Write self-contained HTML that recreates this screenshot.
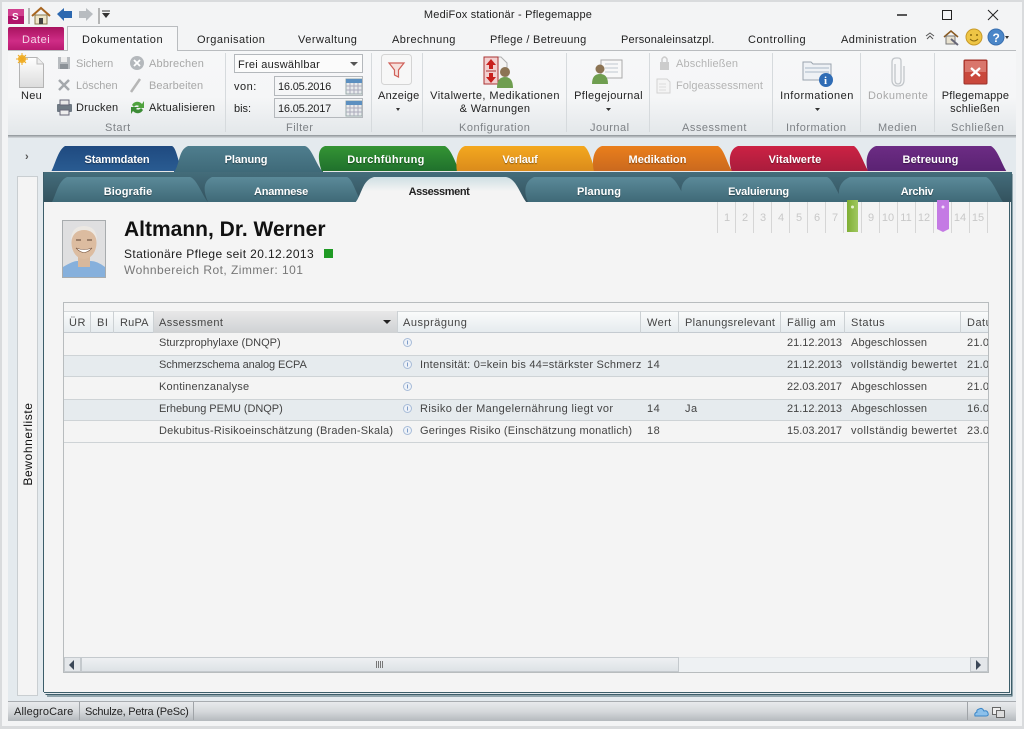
<!DOCTYPE html>
<html><head><meta charset="utf-8">
<style>
html,body{margin:0;padding:0}
body{width:1024px;height:729px;overflow:hidden;position:relative;background:#f3f4f5;font:11px "Liberation Sans",sans-serif;color:#222;letter-spacing:.5px}
.t{position:absolute;white-space:nowrap;line-height:14px;margin-top:1px}
#tbl .t{margin-top:0}
.c{transform:translateX(-50%);text-align:center}
.g{color:#a8a8a8}
.l{color:#7d8185}
.b{position:absolute}
.w{color:#fff;font-weight:bold;letter-spacing:.05px;text-shadow:0 1px 1px rgba(0,0,0,.4)}
svg{position:absolute;left:0;top:0}
</style></head><body>
<div class="b" style="left:0;top:0;width:1024px;height:2px;background:#d9dbdd"></div>
<div class="b" style="left:0;top:0;width:2px;height:729px;background:#d9dbdd"></div>
<div class="b" style="right:0;top:0;width:2px;height:729px;background:#d9dbdd"></div>
<div class="b" style="left:0;top:726px;width:1024px;height:3px;background:#d9dbdd"></div>
<!-- ribbon -->
<div class="b" style="left:8px;top:50px;width:1008px;height:85px;background:linear-gradient(#f6f7f8,#f5f6f7 55%,#e3e7ea);border-top:1px solid #b9bcbf;box-sizing:border-box"></div>
<div class="b" style="left:8px;top:135px;width:1008px;height:3px;background:linear-gradient(#8b9195,#d8dde0)"></div>
<div class="b" style="left:8px;top:138px;width:1008px;height:563px;background:#e4eaee"></div>
<!-- Datei tab -->
<div class="b" style="left:8px;top:27px;width:56px;height:23px;background:linear-gradient(#a8135f,#cf2c86 60%,#b81a70);border-radius:2px 2px 0 0"></div>
<div class="b" style="left:67px;top:26px;width:111px;height:25px;background:#f6f7f8;border:1px solid #b9bcbf;border-bottom:0;box-sizing:border-box"></div>
<svg width="1024" height="729" viewBox="0 0 1024 729">
<!-- qat -->
<rect x="8" y="9" width="16" height="15" fill="#b0126a"/><rect x="8" y="9" width="16" height="7" fill="#d0408f"/>
<text x="12" y="20" font-family="Liberation Sans" font-size="10" font-weight="bold" fill="#fff">S</text>
<path d="M29 8V24M99 8V24" stroke="#777"/>
<path d="M32 16L41 8L50 16" fill="none" stroke="#a8651f" stroke-width="2"/><path d="M35 15H47V24H35Z" fill="#efe6c8" stroke="#8a7a50"/><rect x="39" y="18" width="4" height="6" fill="#444"/>
<path d="M57 14L64 8V11H72V18H64V21Z" fill="#2c68b0"/>
<path d="M93 14L86 8V11H79V18H86V21Z" fill="#b8bcc0"/>
<path d="M102 11H110" stroke="#333"/><path d="M102 13H110L106 18Z" fill="#333"/>
<!-- window buttons -->
<path d="M897 15H907" stroke="#222" stroke-width="1.5"/><rect x="942.500" y="10.500" width="9" height="9" fill="none" stroke="#222"/><path d="M988 10L998 20M998 10L988 20" stroke="#222"/>
<!-- right icons -->
<path d="M926 36L930 33L934 36M927 39L930 36L933 39" fill="none" stroke="#555"/>
<path d="M944 37L951 31L958 37" fill="none" stroke="#8a5a20" stroke-width="1.500"/><path d="M946 36H955V44H946Z" fill="#e8e2d0" stroke="#777"/><path d="M951 39L958 45" stroke="#667" stroke-width="2"/>
<circle cx="974" cy="37" r="8" fill="#eec545" stroke="#c89a28"/><circle cx="971" cy="35" r="1" fill="#8a6a10"/><circle cx="977" cy="35" r="1" fill="#8a6a10"/><path d="M970 39Q974 43 978 39" fill="none" stroke="#8a6a10"/>
<circle cx="996" cy="37" r="8" fill="#4a86c8" stroke="#3a70b0"/><text x="992.500" y="42" font-family="Liberation Sans" font-size="12" font-weight="bold" fill="#fff">?</text><path d="M1005 36H1009L1007 39Z" fill="#333"/>
<!-- ribbon separators -->
<path d="M225.500 53V132M371.500 53V132M422.500 53V132M566.500 53V132M649.500 53V132M772.500 53V132M860.500 53V132M934.500 53V132" stroke="#d6dadd"/>
<!-- Neu -->
<path d="M19.500 57.500H37L43.500 64V87.500H19.500Z" fill="url(#neu)" stroke="#b4b4b4"/><path d="M37 57.500V64H43.500" fill="#eee" stroke="#bbb"/>
<circle cx="22" cy="59" r="4" fill="#f2b632"/><path d="M22 53V65M16 59H28M18 55L26 63M26 55L18 63" stroke="#eea820"/>
<defs><linearGradient id="neu" x1="0" y1="0" x2="0" y2="1"><stop offset="0" stop-color="#fff"/><stop offset="1" stop-color="#dcdcdc"/></linearGradient>
<linearGradient id="tg" x1="0" y1="0" x2="0" y2="1"><stop offset="0" stop-color="#5b8a99"/><stop offset="1" stop-color="#3f6977"/></linearGradient>
<linearGradient id="ta" x1="0" y1="0" x2="0" y2="1"><stop offset="0" stop-color="#cfdfe3"/><stop offset=".55" stop-color="#f4f4f4"/></linearGradient>
<linearGradient id="tb" x1="0" y1="0" x2="0" y2="1"><stop offset="0" stop-color="#1f4a80"/><stop offset="1" stop-color="#2a5c92"/></linearGradient>
<linearGradient id="tp" x1="0" y1="0" x2="0" y2="1"><stop offset="0" stop-color="#4f7e8e"/><stop offset="1" stop-color="#3f6a79"/></linearGradient>
<linearGradient id="td" x1="0" y1="0" x2="0" y2="1"><stop offset="0" stop-color="#349434"/><stop offset="1" stop-color="#1f6f2c"/></linearGradient>
<linearGradient id="tv" x1="0" y1="0" x2="0" y2="1"><stop offset="0" stop-color="#f4a81e"/><stop offset="1" stop-color="#d98a1c"/></linearGradient>
<linearGradient id="tm" x1="0" y1="0" x2="0" y2="1"><stop offset="0" stop-color="#ea7f1c"/><stop offset="1" stop-color="#c9681e"/></linearGradient>
<linearGradient id="tw" x1="0" y1="0" x2="0" y2="1"><stop offset="0" stop-color="#cc2244"/><stop offset="1" stop-color="#a81c3c"/></linearGradient>
<linearGradient id="tt" x1="0" y1="0" x2="0" y2="1"><stop offset="0" stop-color="#6c2c84"/><stop offset="1" stop-color="#5a2272"/></linearGradient>
<linearGradient id="pn" x1="0" y1="0" x2="0" y2="1"><stop offset="0" stop-color="#446d7b"/><stop offset="1" stop-color="#33525e"/></linearGradient>
<linearGradient id="gb" x1="0" y1="0" x2="1" y2="0"><stop offset="0" stop-color="#7fae34"/><stop offset="1" stop-color="#a0c860"/></linearGradient>
</defs>
<!-- start icons -->
<path d="M58 57H70V69H58Z" fill="#b8bcc0"/><rect x="61" y="57" width="6" height="5" fill="#eee"/><rect x="60" y="64" width="8" height="5" fill="#8c9298"/>
<path d="M59 80L69 90M69 80L59 90" stroke="#a4a8ac" stroke-width="2.500"/>
<rect x="57" y="104" width="15" height="8" rx="1" fill="#6f7a84"/><rect x="60" y="100" width="9" height="5" fill="#e8e8e8" stroke="#667"/><rect x="60" y="110" width="9" height="5" fill="#eee" stroke="#667"/>
<circle cx="137" cy="63" r="7" fill="#b4b8bc"/><path d="M134 60L140 66M140 60L134 66" stroke="#fff" stroke-width="1.800"/>
<path d="M131 92L140 79" stroke="#b6b6b6" stroke-width="2.500"/>
<path d="M132 105A6 6 0 0 1 142 104L144 101V108H137L139 106A3.500 3.500 0 0 0 134 107Z" fill="#4fa23e"/><path d="M143 110A6 6 0 0 1 133 111L131 114V107H138L136 109A3.500 3.500 0 0 0 141 108Z" fill="#3c8c36"/>
<!-- calendar -->
<rect x="346" y="79" width="16" height="15" fill="#e8eaec" stroke="#9aa"/><rect x="346" y="79" width="16" height="4" fill="#5c8fc0"/><path d="M346 86H362M346 90H362M350 83V94M354 83V94M358 83V94" stroke="#aab"/>
<rect x="346" y="101" width="16" height="15" fill="#e8eaec" stroke="#9aa"/><rect x="346" y="101" width="16" height="4" fill="#5c8fc0"/><path d="M346 108H362M346 112H362M350 105V116M354 105V116M358 105V116" stroke="#aab"/>
<!-- Anzeige -->
<rect x="381.500" y="54.500" width="30" height="30" rx="3" fill="#f7f7f7" stroke="#d4d4d4"/>
<path d="M389 63H404L398.500 70V77L394.500 75V70Z" fill="#f6e0dc" stroke="#cf5f58" stroke-width="1.200"/>
<path d="M396 108H400L398 111Z" fill="#333"/>
<!-- Vitalwerte -->
<path d="M484 57H501L507 63V84H484Z" fill="#f4f4f4" stroke="#b0b0b0"/><path d="M484 57H498V84H484Z" fill="#f2cfcf" stroke="#a33"/>
<path d="M491 59L496 65H493V69H489V65H486Z" fill="#c8201e"/><path d="M491 83L496 77H493V73H489V77H486Z" fill="#c8201e"/><path d="M486 71H496" stroke="#a33"/>
<circle cx="505" cy="72" r="5" fill="#8c7454"/><path d="M497 88Q497 77 505 77Q513 77 513 88Z" fill="#6f9e50"/>
<path d="M606 108H611L608.500 111Z" fill="#333"/>
<!-- Pflegejournal -->
<path d="M601 60H622V78H601Z" fill="#f8f8f8" stroke="#aaa"/><path d="M605 64H618M605 68H618M605 72H618" stroke="#c0c8d0"/>
<circle cx="600" cy="69" r="4.500" fill="#8c7454"/><path d="M592 84Q592 74 600 74Q608 74 608 84Z" fill="#6f9e50"/>
<!-- assessment icons -->
<rect x="660" y="62" width="9" height="8" fill="#ccc"/><path d="M662 62V59Q664.500 55 667 59V62" fill="none" stroke="#ccc" stroke-width="1.500"/>
<path d="M657 79H667L670 82V93H657Z" fill="#f4f4f4" stroke="#d2d2d2"/><path d="M659 84H666M659 87H666M659 90H666" stroke="#ddd"/>
<!-- info -->
<path d="M803 62H811L813 64H831V80H803Z" fill="#eef1f5" stroke="#9aa4ae"/><path d="M805 68H829M805 72H829" stroke="#a8b8c8"/>
<circle cx="826" cy="80" r="7" fill="#2f6cb5"/><text x="824" y="84" font-family="Liberation Serif" font-size="11" font-weight="bold" fill="#fff">i</text>
<path d="M815 108H820L817.500 111Z" fill="#333"/>
<!-- Dokumente clip -->
<path d="M895 64V80Q895 84 898 84Q901 84 901 80V61Q901 58 898 58H896Q892 58 892 62V80Q892 86 898 86Q904 86 904 80V66" fill="none" stroke="#c2c6ca" stroke-width="1.300"/>
<!-- close -->
<rect x="964" y="60" width="23" height="24" rx="1" fill="#c9483c" stroke="#9c3028"/><rect x="965" y="61" width="21" height="11" fill="#d9766c"/>
<path d="M971 68L980 76M980 68L971 76" stroke="#fff" stroke-width="2.300"/>
<!-- top colored tabs -->
<path d="M51 172C55 165 58 150 65 146H172C177 148 178 165 184 172Z" fill="url(#tb)"/>
<path d="M322 172H460C456 165 452 150 445 146H325C318 148 317 158 322 172Z" fill="url(#td)"/>
<path d="M457 172H597C592 165 590 150 584 146H465C458 148 455 160 457 172Z" fill="url(#tv)"/>
<path d="M594 172H733C727 165 725 150 718 146H602C595 148 591 158 594 172Z" fill="url(#tm)"/>
<path d="M732 172H869C864 165 860 150 854 146H738C731 148 727 158 732 172Z" fill="url(#tw)"/>
<path d="M868 172H1007C1002 165 998 150 991 146H876C869 148 864 158 868 172Z" fill="url(#tt)"/>
<path d="M174 172C180 165 178 150 188 146H305C312 148 316 165 323 172Z" fill="url(#tp)"/>
<path d="M44 171.500H174M323 171.500H1010" stroke="#e8e8e8" stroke-width="1"/>
<!-- panel -->
<rect x="43" y="172" width="969" height="30" fill="url(#pn)"/>
<path d="M52 202C56 195 58 181 67 177H190C197 179 202 195 208 202Z" fill="url(#tg)"/>
<path d="M208 202C203 191 203 181 212 177H347C353 179 356 195 362 202Z" fill="url(#tg)"/>
<path d="M528 202C523 191 525 181 534 177H670C677 179 682 195 688 202Z" fill="url(#tg)"/>
<path d="M684 202C679 191 681 181 690 177H827C833 179 838 195 844 202Z" fill="url(#tg)"/>
<path d="M841 202C836 191 840 181 850 177H986C992 179 998 195 1003 202Z" fill="url(#tg)"/>
<rect x="44" y="202" width="965" height="490" fill="#f4f4f4"/>
<path d="M355 203C362 195 362 180 374 177H506C517 179 520 195 527 203Z" fill="url(#ta)"/>
<!-- panel frame -->
<path d="M43.500 172V692M44 692.500H1009.500V202" fill="none" stroke="#3c5d69"/>
<path d="M45.500 694.500H1011.500V202" fill="none" stroke="#3c5d69"/>
<path d="M47 696H1012V174" fill="none" stroke="#3c5d69" stroke-width="1"/>
<!-- ruler -->
<path d="M717.500 202V233M735.500 202V233M753.500 202V233M771.500 202V233M789.500 202V233M807.500 202V233M825.500 202V233M843.500 202V233M861.500 202V233M879.500 202V233M897.500 202V233M915.500 202V233M933.500 202V233M951.500 202V233M969.500 202V233M987.500 202V233" stroke="#d6d6d6"/>
<path d="M847 200H858V232H847Z" fill="url(#gb)"/><circle cx="852.500" cy="207" r="1.500" fill="#e8f4d0"/>
<path d="M937 200H949V229L943 232L937 229Z" fill="#c47ae4"/><circle cx="943" cy="207" r="1.500" fill="#f4e0fc"/>
<!-- status icons -->
<circle cx="133.500" cy="343.500" r="6.500" fill="#e4f4e0" stroke="#3f8f46"/><path d="M130 343.500L132.800 346.500L137.200 340.800" fill="none" stroke="#2f7f3a" stroke-width="1.500"/>
<circle cx="133.500" cy="365.500" r="6.500" fill="#c0282a"/><rect x="132.500" y="360.500" width="2" height="6" fill="#fff"/><rect x="132.500" y="367.800" width="2" height="2" fill="#fff"/>
<circle cx="133.500" cy="387.500" r="6.500" fill="#e4f4e0" stroke="#3f8f46"/><path d="M130 387.500L132.800 390.500L137.200 384.800" fill="none" stroke="#2f7f3a" stroke-width="1.500"/>
<circle cx="133.500" cy="409.500" r="6.500" fill="#e4f4e0" stroke="#3f8f46"/><path d="M130 409.500L132.800 412.500L137.200 406.800" fill="none" stroke="#2f7f3a" stroke-width="1.500"/>
<circle cx="133.500" cy="431.500" r="6.500" fill="#eeb844" stroke="#d89a2c"/><path d="M130 431.500L132.800 434L137.500 429" fill="none" stroke="#fff" stroke-width="1.500"/>
</svg>
<!-- ribbon text -->
<div class="t" style="left:508px;top:7px;transform:translateX(-50%);letter-spacing:.2px">MediFox stationär - Pflegemappe</div>
<div class="t" style="left:22px;top:32px;color:#f4d4e6">Datei</div>
<div class="t" style="left:82px;top:32px;letter-spacing:.55px">Dokumentation</div>
<div class="t" style="left:197px;top:32px">Organisation</div>
<div class="t" style="left:298px;top:32px">Verwaltung</div>
<div class="t" style="left:392px;top:32px;letter-spacing:.45px">Abrechnung</div>
<div class="t" style="left:490px;top:32px;letter-spacing:.3px">Pflege / Betreuung</div>
<div class="t" style="left:621px;top:32px;letter-spacing:.2px">Personaleinsatzpl.</div>
<div class="t" style="left:748px;top:32px">Controlling</div>
<div class="t" style="left:841px;top:32px;letter-spacing:.45px">Administration</div>
<div class="t" style="left:21px;top:88px;letter-spacing:.3px">Neu</div>
<div class="t g" style="left:76px;top:56px;letter-spacing:0">Sichern</div>
<div class="t g" style="left:76px;top:78px;letter-spacing:0">Löschen</div>
<div class="t" style="left:76px;top:100px;letter-spacing:.2px">Drucken</div>
<div class="t g" style="left:149px;top:56px;letter-spacing:.2px">Abbrechen</div>
<div class="t g" style="left:149px;top:78px;letter-spacing:.1px">Bearbeiten</div>
<div class="t" style="left:149px;top:100px;letter-spacing:.25px">Aktualisieren</div>
<div class="t l" style="left:105px;top:120px">Start</div>
<div class="b" style="left:234px;top:54px;width:129px;height:19px;border:1px solid #b4b8bc;background:#fbfbfb;box-sizing:border-box"></div>
<div class="t" style="left:238px;top:57px;letter-spacing:.25px">Frei auswählbar</div>
<div class="b" style="left:350px;top:62px;border:4px solid transparent;border-top:4px solid #555;border-bottom:0"></div>
<div class="t" style="left:234px;top:79px">von:</div>
<div class="t" style="left:234px;top:101px;letter-spacing:0">bis:</div>
<div class="b" style="left:274px;top:76px;width:89px;height:20px;border:1px solid #b4b8bc;box-sizing:border-box;background:transparent"></div>
<div class="b" style="left:274px;top:98px;width:89px;height:20px;border:1px solid #b4b8bc;box-sizing:border-box"></div>
<div class="t" style="left:278px;top:79px;letter-spacing:-.2px">16.05.2016</div>
<div class="t" style="left:278px;top:101px;letter-spacing:-.2px">16.05.2017</div>
<div class="t l" style="left:286px;top:120px">Filter</div>
<div class="t" style="left:378px;top:88px;letter-spacing:.25px">Anzeige</div>
<div class="t c" style="left:495px;top:88px;letter-spacing:.42px">Vitalwerte, Medikationen</div>
<div class="t c" style="left:495px;top:101px;letter-spacing:.35px">&amp; Warnungen</div>
<div class="t l" style="left:459px;top:120px">Konfiguration</div>
<div class="t c" style="left:608.500px;top:88px;letter-spacing:.35px">Pflegejournal</div>
<div class="t l" style="left:590px;top:120px">Journal</div>
<div class="t g" style="left:676px;top:56px;color:#b4b4b4;letter-spacing:.15px">Abschließen</div>
<div class="t g" style="left:676px;top:78px;color:#b4b4b4;letter-spacing:.05px">Folgeassessment</div>
<div class="t l" style="left:682px;top:120px">Assessment</div>
<div class="t c" style="left:817px;top:88px">Informationen</div>
<div class="t l" style="left:786px;top:120px">Information</div>
<div class="t g" style="left:868px;top:88px;letter-spacing:.45px">Dokumente</div>
<div class="t l" style="left:878px;top:120px">Medien</div>
<div class="t c" style="left:975.500px;top:88px;letter-spacing:.25px">Pflegemappe</div>
<div class="t c" style="left:975px;top:101px;letter-spacing:.3px">schließen</div>
<div class="t l" style="left:951px;top:120px">Schließen</div>
<!-- sidebar -->
<div class="t" style="left:25px;top:149px;font-weight:bold;color:#555">›</div>
<div class="b" style="left:17px;top:176px;width:21px;height:520px;background:#f4f4f4;border:1px solid #c9ced1;box-sizing:border-box"></div>
<div class="t" style="left:28px;top:443px;transform:translate(-50%,-50%) rotate(-90deg);letter-spacing:.6px;font-size:12px;color:#111">Bewohnerliste</div>
<!-- tabs text -->
<div class="t w c" style="left:117px;top:152px;letter-spacing:-.1px">Stammdaten</div>
<div class="t w c" style="left:246px;top:152px;letter-spacing:-.1px">Planung</div>
<div class="t w c" style="left:386px;top:152px;letter-spacing:.35px">Durchführung</div>
<div class="t w c" style="left:520px;top:152px;letter-spacing:-.2px">Verlauf</div>
<div class="t w c" style="left:657.500px;top:152px">Medikation</div>
<div class="t w c" style="left:795px;top:152px;letter-spacing:.1px">Vitalwerte</div>
<div class="t w c" style="left:930.500px;top:152px;letter-spacing:.1px">Betreuung</div>
<div class="t w c" style="left:128px;top:184px;letter-spacing:.1px">Biografie</div>
<div class="t w c" style="left:281px;top:184px;letter-spacing:-.2px">Anamnese</div>
<div class="t c" style="left:439px;top:184px;font-weight:bold;letter-spacing:-.4px">Assessment</div>
<div class="t w c" style="left:599px;top:184px;letter-spacing:.1px">Planung</div>
<div class="t w c" style="left:758.500px;top:184px;letter-spacing:-.2px">Evaluierung</div>
<div class="t w c" style="left:917px;top:184px;letter-spacing:-.3px">Archiv</div>
<!-- ruler numbers -->
<div id="n" style="color:#c8c8c8;letter-spacing:0">
<div class="t c" style="left:727px;top:210px">1</div><div class="t c" style="left:745px;top:210px">2</div><div class="t c" style="left:763px;top:210px">3</div><div class="t c" style="left:781px;top:210px">4</div><div class="t c" style="left:799px;top:210px">5</div><div class="t c" style="left:817px;top:210px">6</div><div class="t c" style="left:835px;top:210px">7</div><div class="t c" style="left:871px;top:210px">9</div><div class="t c" style="left:888px;top:210px">10</div><div class="t c" style="left:906px;top:210px">11</div><div class="t c" style="left:924px;top:210px">12</div><div class="t c" style="left:960px;top:210px">14</div><div class="t c" style="left:978px;top:210px">15</div>
</div>
<!-- patient -->
<div class="b" style="left:62px;top:220px;width:44px;height:58px;border:1px solid #a8acae;box-sizing:border-box;background:#dfdfe0;overflow:hidden">
<svg width="42" height="56" viewBox="0 0 42 56"><path d="M0 56V46Q10 40 14 40H28Q34 40 42 46V56Z" fill="#86b0dc"/><rect x="15" y="34" width="12" height="12" fill="#d8b89c"/><ellipse cx="21" cy="22" rx="12.500" ry="16" fill="#dcbca0"/><path d="M8 20Q8 5 21 5Q34 5 34 20Q31 9 21 9Q11 9 8 20Z" fill="#ecE8e2"/><path d="M13 27Q21 36 29 27Q21 30 13 27Z" fill="#fff" stroke="#7c5a44" stroke-width=".6"/><path d="M13 19H18M24 19H29" stroke="#5a4030"/></svg></div>
<div class="t" style="left:124px;top:216px;font-size:21px;line-height:26px;font-weight:bold;color:#111;letter-spacing:0">Altmann, Dr. Werner</div>
<div class="t" style="left:124px;top:246px;font-size:12px;letter-spacing:.38px;color:#1c1c1c">Stationäre Pflege seit 20.12.2013</div>
<div class="b" style="left:324px;top:249px;width:9px;height:9px;background:#1f9a24"></div>
<div class="t" style="left:124px;top:262px;font-size:12px;letter-spacing:.46px;color:#777">Wohnbereich Rot, Zimmer: 101</div>
<!-- table -->
<div class="b" style="left:63px;top:302px;width:926px;height:371px;border:1px solid #b8bcbe;box-sizing:border-box;background:#f4f4f4;overflow:hidden">
<div class="b" style="left:0;top:8px;width:924px;height:22px;background:linear-gradient(#fafbfb,#e6ebee);border-top:1px solid #d4d8da;border-bottom:1px solid #c4cad0;box-sizing:border-box"></div>
<div class="b" style="left:90px;top:8px;width:243px;height:22px;background:linear-gradient(#e8e8e8,#cfd2d4)"></div>
<div class="b" style="left:0;top:52px;width:924px;height:22px;background:#e6ebee;border-top:1px solid #ced3d6;border-bottom:1px solid #ced3d6;box-sizing:border-box"></div>
<div class="b" style="left:0;top:96px;width:924px;height:22px;background:#e6ebee;border-top:1px solid #ced3d6;border-bottom:1px solid #ced3d6;box-sizing:border-box"></div>
<div class="b" style="left:0;top:139px;width:924px;height:1px;background:#ced3d6"></div>
<div class="b" style="left:26px;top:8px;width:1px;height:22px;background:#ccd1d4"></div>
<div class="b" style="left:49px;top:8px;width:1px;height:22px;background:#ccd1d4"></div>
<div class="b" style="left:89px;top:8px;width:1px;height:22px;background:#ccd1d4"></div>
<div class="b" style="left:333px;top:8px;width:1px;height:22px;background:#ccd1d4"></div>
<div class="b" style="left:576px;top:8px;width:1px;height:22px;background:#ccd1d4"></div>
<div class="b" style="left:614px;top:8px;width:1px;height:22px;background:#ccd1d4"></div>
<div class="b" style="left:716px;top:8px;width:1px;height:22px;background:#ccd1d4"></div>
<div class="b" style="left:780px;top:8px;width:1px;height:22px;background:#ccd1d4"></div>
<div class="b" style="left:896px;top:8px;width:1px;height:22px;background:#ccd1d4"></div>
<div class="b" style="left:319px;top:17px;border:4px solid transparent;border-top:4px solid #222;border-bottom:0"></div>
<!-- scrollbar -->
<div class="b" style="left:0;top:354px;width:924px;height:15px;background:#eef1f3;border-top:1px solid #e2e5e7;box-sizing:border-box"></div>
<div class="b" style="left:17px;top:354px;width:598px;height:15px;background:linear-gradient(#eef0f2,#dde2e6);border:1px solid #c4c9cd;box-sizing:border-box"></div>
<div class="b" style="left:0;top:354px;width:17px;height:15px;background:#e4e7ea;border:1px solid #c4c9cd;box-sizing:border-box"></div>
<div class="b" style="left:906px;top:354px;width:18px;height:15px;background:#e4e7ea;border:1px solid #c4c9cd;box-sizing:border-box"></div>
<div class="b" style="left:5px;top:357px;border:5px solid transparent;border-right:5px solid #3c4858;border-left:0"></div>
<div class="b" style="left:912px;top:357px;border:5px solid transparent;border-left:5px solid #3c4858;border-right:0"></div>
<div class="b" style="left:312px;top:358px;width:7px;height:7px;background:repeating-linear-gradient(90deg,#777 0 1px,transparent 1px 2px)"></div>
</div>
<div id="tbl" style="color:#444">
<div class="t" style="left:69px;top:316px">ÜR</div><div class="t" style="left:97px;top:316px">BI</div><div class="t" style="left:120px;top:316px;letter-spacing:.2px">RuPA</div>
<div class="t" style="left:159px;top:316px;letter-spacing:.45px">Assessment</div><div class="t" style="left:403px;top:316px">Ausprägung</div><div class="t" style="left:647px;top:316px;letter-spacing:.4px">Wert</div><div class="t" style="left:685px;top:316px;letter-spacing:.33px">Planungsrelevant</div><div class="t" style="left:787px;top:316px">Fällig am</div><div class="t" style="left:851px;top:316px">Status</div><div class="t" style="left:967px;top:316px;width:21px;overflow:hidden">Datum</div>
<div class="t" style="left:159px;top:336px;letter-spacing:0">Sturzprophylaxe (DNQP)</div>
<div class="t" style="left:159px;top:358px;letter-spacing:-.1px">Schmerzschema analog ECPA</div>
<div class="t" style="left:159px;top:380px;letter-spacing:.22px">Kontinenzanalyse</div>
<div class="t" style="left:159px;top:402px;letter-spacing:-.05px">Erhebung PEMU (DNQP)</div>
<div class="t" style="left:159px;top:424px;letter-spacing:.23px">Dekubitus-Risikoeinschätzung (Braden-Skala)</div>
<div class="t" style="left:420px;top:358px;width:222px;overflow:hidden;letter-spacing:.25px">Intensität: 0=kein bis 44=stärkster Schmerz</div>
<div class="t" style="left:420px;top:402px;letter-spacing:.38px">Risiko der Mangelernährung liegt vor</div>
<div class="t" style="left:420px;top:424px;letter-spacing:.2px">Geringes Risiko (Einschätzung monatlich)</div>
<div class="t" style="left:647px;top:358px">14</div><div class="t" style="left:647px;top:402px">14</div><div class="t" style="left:647px;top:424px">18</div><div class="t" style="left:685px;top:402px">Ja</div>
<div class="t" style="left:787px;top:336px;letter-spacing:0">21.12.2013</div><div class="t" style="left:787px;top:358px;letter-spacing:0">21.12.2013</div><div class="t" style="left:787px;top:380px;letter-spacing:0">22.03.2017</div><div class="t" style="left:787px;top:402px;letter-spacing:0">21.12.2013</div><div class="t" style="left:787px;top:424px;letter-spacing:0">15.03.2017</div>
<div class="t" style="left:851px;top:336px;letter-spacing:.12px">Abgeschlossen</div><div class="t" style="left:851px;top:358px;letter-spacing:.45px">vollständig bewertet</div><div class="t" style="left:851px;top:380px;letter-spacing:.12px">Abgeschlossen</div><div class="t" style="left:851px;top:402px;letter-spacing:.12px">Abgeschlossen</div><div class="t" style="left:851px;top:424px;letter-spacing:.45px">vollständig bewertet</div>
<div class="t" style="left:967px;top:336px;width:21px;overflow:hidden;letter-spacing:.2px">21.03.2017</div><div class="t" style="left:967px;top:358px;width:21px;overflow:hidden;letter-spacing:.2px">21.03.2017</div><div class="t" style="left:967px;top:380px;width:21px;overflow:hidden;letter-spacing:.2px">21.03.2017</div><div class="t" style="left:967px;top:402px;width:21px;overflow:hidden;letter-spacing:.2px">16.03.2017</div><div class="t" style="left:967px;top:424px;width:21px;overflow:hidden;letter-spacing:.2px">23.03.2017</div>
</div>
<svg width="1024" height="729" viewBox="0 0 1024 729" style="pointer-events:none">
<g fill="#eef2f8" stroke="#a8bcd8"><circle cx="407.500" cy="342.500" r="4"/><circle cx="407.500" cy="364.500" r="4"/><circle cx="407.500" cy="386.500" r="4"/><circle cx="407.500" cy="408.500" r="4"/><circle cx="407.500" cy="430.500" r="4"/></g>
<path d="M407.500 340.500V344.500M407.500 362.500V366.500M407.500 384.500V388.500M407.500 406.500V410.500M407.500 428.500V432.500" stroke="#7d9cc8"/>
</svg>
<!-- status bar -->
<div class="b" style="left:8px;top:701px;width:1008px;height:20px;background:linear-gradient(#e8eaec,#d5d8db 50%,#b4b9bd);border-top:1px solid #a8acb0;box-sizing:border-box"></div>
<div class="b" style="left:79px;top:702px;width:1px;height:18px;background:#a0a4a8"></div>
<div class="b" style="left:193px;top:702px;width:1px;height:18px;background:#a0a4a8"></div>
<div class="b" style="left:967px;top:702px;width:1px;height:18px;background:#a0a4a8"></div>
<div class="t" style="left:14px;top:704px;letter-spacing:.12px">AllegroCare</div>
<div class="t" style="left:85px;top:704px;letter-spacing:-.22px">Schulze, Petra (PeSc)</div>
<svg width="1024" height="729" viewBox="0 0 1024 729" style="pointer-events:none">
<path d="M975 716H986Q989 716 988 713Q987 710 984 711Q982 707 979 709Q976 710 977 712Q974 713 975 716Z" fill="#8cc0ea" stroke="#3a86c8"/>
<rect x="992.500" y="707.500" width="8" height="7" fill="#eee" stroke="#666"/><rect x="996.500" y="710.500" width="8" height="7" fill="#ddd" stroke="#666"/>
</svg>
</body></html>
